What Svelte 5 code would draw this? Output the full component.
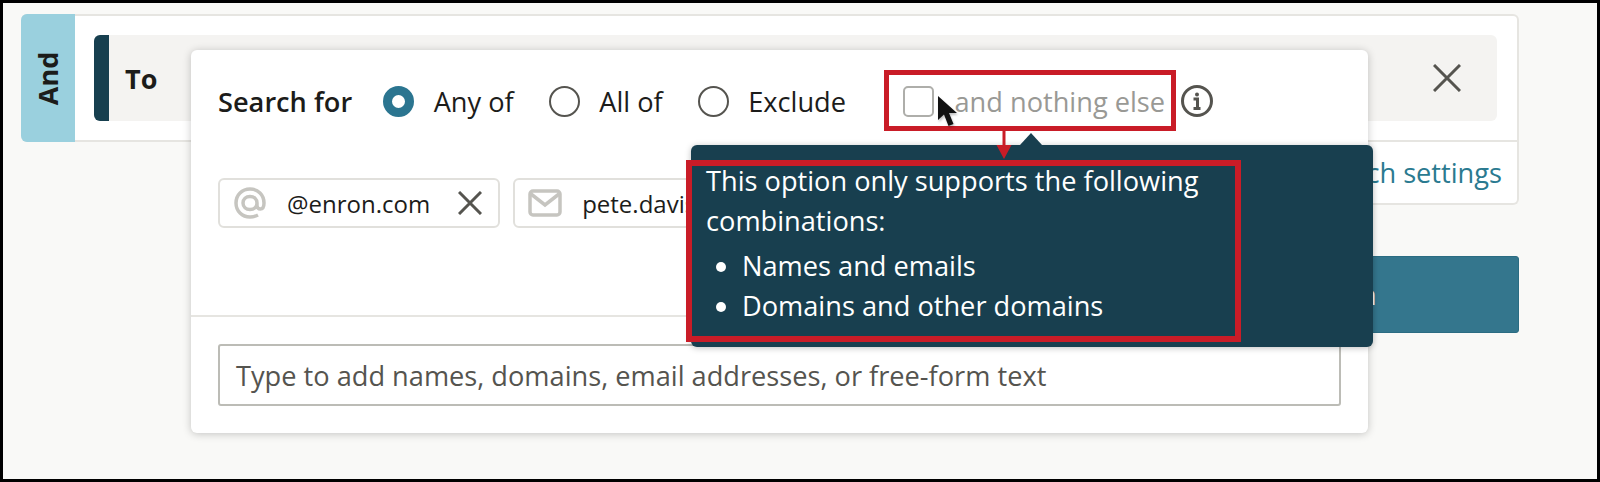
<script>
  const modes = [
    { label: 'Any of', checked: true },
    { label: 'All of', checked: false },
    { label: 'Exclude', checked: false }
  ];
</script>

<div class="frame">
  <section class="card">
    <div class="card-top">
      <div class="tab"><span>And</span></div>
      <div class="to-row">
        <div class="strip"></div>
        <strong>To</strong>
        <svg class="close" viewBox="0 0 28 28" aria-hidden="true">
          <path d="M1 1 27 27M27 1 1 27" />
        </svg>
      </div>
    </div>
    <div class="card-bottom">
      <a href="#settings">Edit search settings</a>
    </div>
  </section>

  <div class="actions">
    <button>Search</button>
  </div>

  <div class="popover">
    <div class="mode-row">
      <b>Search for</b>
      {#each modes as mode}
        <span class="radio" class:checked={mode.checked}></span>
        <span class="mode-label">{mode.label}</span>
      {/each}
      <span class="checkbox"></span>
      <span class="only">and nothing else</span>
      <svg class="info" viewBox="0 0 32 32" aria-hidden="true">
        <circle cx="16" cy="16" r="14.500" />
        <circle class="dot" cx="16" cy="9.500" r="2" />
        <path d="M12.500 14h4v9M12.500 23.500h7" />
      </svg>
    </div>

    <div class="chips">
      <div class="chip">
        <svg class="chip-icon" viewBox="0 0 34 34" aria-hidden="true">
          <path d="M24 17c0 4-3 6.500-7 6.500S10 21 10 17s3-6.500 7-6.500 7 2.500 7 6.500v2.500c0 2 1.300 3.500 3.300 3.500S31 21 31 17C31 9 25 3 17 3S3 9 3 17s6 14 14 14c3 0 5.500-.7 8-2" />
        </svg>
        <span>@enron.com</span>
        <svg class="chip-x" viewBox="0 0 24 24" aria-hidden="true">
          <path d="M1 1 23 23M23 1 1 23" />
        </svg>
      </div>
      <div class="chip">
        <svg class="chip-icon" viewBox="0 0 34 28" aria-hidden="true">
          <rect x="2" y="2" width="30" height="24" rx="3" />
          <path d="M3 5 17 16 31 5" />
        </svg>
        <span>pete.davis@enron.com</span>
      </div>
    </div>

    <div class="input-wrap">
      <div class="fake-input">Type to add names, domains, email addresses, or free-form text</div>
    </div>
  </div>

  <div class="tooltip">
    <p>This option only supports the following combinations:</p>
    <ul>
      <li>Names and emails</li>
      <li>Domains and other domains</li>
    </ul>
  </div>

  <div class="mark mark-check"></div>
  <div class="mark mark-tip"></div>
  <svg class="mark-arrow" viewBox="0 0 16 30" aria-hidden="true">
    <path d="M6.500 0h3v15H15.500L8 29 .5 15h6z" />
  </svg>
  <svg class="pointer" viewBox="0 0 20 32" aria-hidden="true">
    <path d="M1 0v24l6-5.500 4.500 11.500 5-2-4.500-11h8z" />
  </svg>
</div>

<style>
  :global(body) {
    margin: 0;
  }

  .frame {
    position: relative;
    box-sizing: border-box;
    width: 1600px;
    height: 482px;
    border: 3px solid #000;
    padding: 11px 77px 0 18px;
    background: #f9f9f7;
    font-family: "Open Sans", sans-serif;
    color: #1c1c1a;
    overflow: hidden;
  }

  .card {
    height: 191px;
    display: flex;
    flex-direction: column;
    width: 1498px;
  }

  .card-top {
    display: flex;
    box-sizing: border-box;
    height: 128px;
    background: #fff;
    border: 2px solid #e6e5e1;
    border-left: 0;
    border-radius: 6px 6px 0 6px;
  }

  .tab {
    width: 54px;
    background: #9ad0de;
    border-radius: 6px 0 0 6px;
    margin: -2px 0 -2px;
    display: flex;
    align-items: center;
    justify-content: center;
  }

  .tab span {
    transform: rotate(-90deg);
    font-size: 27px;
    font-weight: 700;
  }

  .to-row {
    flex: 1;
    margin: 19px 20px 19px 19px;
    background: #f4f3f1;
    border-radius: 6px;
    display: flex;
    align-items: center;
    overflow: hidden;
  }

  .strip {
    width: 15px;
    align-self: stretch;
    background: #173f4f;
  }

  .to-row strong {
    margin: 0 0 0 16px;
    font-size: 27px;
  }

  .close {
    width: 28px;
    height: 28px;
    margin-left: auto;
    margin-right: 36px;
  }

  .close path,
  .chip-x path {
    fill: none;
    stroke: #55544f;
    stroke-width: 3;
  }

  .card-bottom {
    flex: 1;
    margin-left: 300px;
    display: flex;
    align-items: center;
    justify-content: flex-end;
    padding: 0 15px 0 0;
    background: #fff;
    border: 2px solid #e6e5e1;
    border-top: 0;
    border-radius: 0 0 6px 6px;
  }

  .card-bottom a {
    color: #2a7a90;
    font-size: 27.200px;
    text-decoration: none;
  }

  .actions {
    display: flex;
    margin-top: 51px;
    padding-left: 1124px;
  }

  button {
    width: 374px;
    height: 77px;
    background: #34768d;
    border: 1px solid #2b6c82;
    border-radius: 3px;
    color: #fff;
    font: 600 27.200px "Open Sans", sans-serif;
  }

  .popover {
    position: absolute;
    left: 188px;
    top: 47px;
    width: 1177px;
    height: 383px;
    box-sizing: border-box;
    background: #fff;
    border-radius: 6px;
    box-shadow: 0 1px 8px rgb(0 0 0 / 22%);
    display: flex;
    flex-direction: column;
  }

  .mode-row {
    display: flex;
    align-items: center;
    height: 32px;
    margin: 35px 0 0 27px;
    font-size: 27.200px;
    white-space: nowrap;
  }

  .mode-row b {
    font-weight: 600;
    margin-right: 31px;
  }

  .radio {
    box-sizing: border-box;
    width: 31px;
    height: 31px;
    border-radius: 50%;
    border: 2px solid #55544f;
    margin-right: 19.500px;
  }

  .radio.checked {
    border: 9px solid #2b7590;
  }

  .mode-label {
    margin-right: 35px;
  }

  .checkbox {
    box-sizing: border-box;
    width: 31px;
    height: 31px;
    border: 2px solid #aeaeaa;
    border-radius: 5px;
    margin: 0 20px 0 22.500px;
  }

  .only {
    color: #999995;
  }

  .info {
    width: 32px;
    height: 32px;
    margin-left: 16px;
  }

  .info circle {
    fill: none;
    stroke: #55544f;
    stroke-width: 3;
  }

  .info .dot {
    fill: #55544f;
    stroke: none;
  }

  .info path {
    fill: none;
    stroke: #55544f;
    stroke-width: 3;
  }

  .chips {
    display: flex;
    gap: 13px;
    margin: 61px 0 0 27px;
  }

  .chip {
    box-sizing: border-box;
    height: 50px;
    border: 2px solid #e1e0dc;
    border-radius: 6px;
    display: flex;
    align-items: center;
    padding: 0 16px 0 13px;
    font-size: 24px;
    white-space: nowrap;
  }

  .chip span {
    margin: 0 28px 0 20px;
  }

  .chip-icon {
    width: 34px;
    height: 34px;
  }

  .chip-icon path,
  .chip-icon rect {
    fill: none;
    stroke: #c6c5c0;
    stroke-width: 3.500;
  }

  .chip-x {
    width: 24px;
    height: 24px;
  }

  .input-wrap {
    margin-top: 87px;
    border-top: 2px solid #e6e5e1;
    padding: 27px 27px 0;
  }

  .fake-input {
    box-sizing: border-box;
    height: 62px;
    border: 2px solid #bcbcb6;
    border-radius: 3px;
    padding: 0 16px;
    display: flex;
    align-items: center;
    font-size: 27.200px;
    color: #55544f;
    white-space: nowrap;
  }

  .tooltip {
    position: absolute;
    left: 688px;
    top: 142px;
    width: 682px;
    height: 202px;
    box-sizing: border-box;
    padding: 16px 170px 0 15px;
    background: #183f4f;
    border-radius: 6px;
    box-shadow: 0 1px 6px rgb(0 0 0 / 25%);
    color: #fff;
    font-size: 27.200px;
    line-height: 40px;
  }

  .tooltip::before {
    content: "";
    position: absolute;
    left: 329px;
    top: -12px;
    border: 11px solid transparent;
    border-top: 0;
    border-bottom: 12px solid #183f4f;
  }

  .tooltip p {
    margin: 0 0 5px;
  }

  .tooltip ul {
    margin: 0;
    padding-left: 36px;
  }

  .mark {
    position: absolute;
    box-sizing: border-box;
    border: 5px solid #c91c27;
  }

  .mark-check {
    left: 881px;
    top: 67px;
    width: 292px;
    height: 61px;
  }

  .mark-tip {
    left: 683px;
    top: 157px;
    width: 555px;
    height: 182px;
    border-width: 6px;
  }

  .mark-arrow {
    position: absolute;
    left: 993px;
    top: 127px;
    width: 16px;
    height: 30px;
    fill: #c91c27;
  }

  .pointer {
    position: absolute;
    left: 934px;
    top: 93px;
    width: 20px;
    height: 32px;
    fill: #111;
    filter: drop-shadow(1px 2px 1px rgb(0 0 0 / 25%));
  }
</style>
